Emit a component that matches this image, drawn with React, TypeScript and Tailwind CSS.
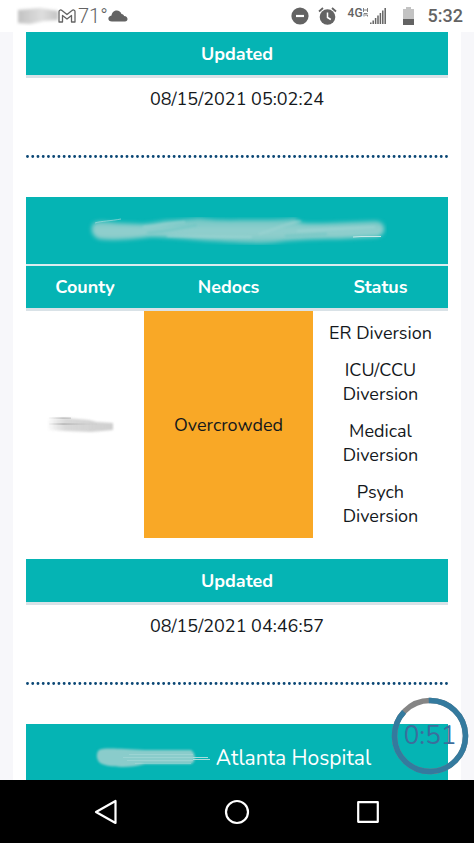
import React from 'react';

const TIME_LEFT = '0:51';

// Soft brush strokes that hide a name
const TitleSmudge: React.FC = () => (
  <svg className="h-7 w-[300px]" viewBox="0 0 300 28" aria-hidden="true">
    <defs>
      <linearGradient id="title-fade" x1="0" y1="0" x2="0" y2="1">
        <stop offset="0" stopColor="#6cc5c3" />
        <stop offset="0.45" stopColor="#90cfcd" />
        <stop offset="0.75" stopColor="#8ccdcb" />
        <stop offset="1" stopColor="#5ac2c0" />
      </linearGradient>
      <filter id="soft-title" x="-5%" y="-40%" width="110%" height="180%">
        <feGaussianBlur stdDeviation="2" />
      </filter>
      <filter id="soft-streak" x="-5%" y="-50%" width="110%" height="200%">
        <feGaussianBlur stdDeviation="1.2" />
      </filter>
    </defs>
    <path
      d="M7 6C13 3 22 5 32 6L56 7C70 6 74 3 90 3L112 1C120 2 132 3 146 3C166 2 184 4 210 1C206 6 222 7 242 6L288 4C300 4 300 18 290 20L252 22C222 22 204 23 186 26C166 28 146 25 122 24C98 22 80 20 62 20C40 23 24 24 12 22C4 19 3 10 7 6Z"
      fill="url(#title-fade)"
      filter="url(#soft-title)"
    />
    <g fill="none" filter="url(#soft-streak)">
      <path d="M56 10C76 9 84 5 98 5M172 17C188 13 196 7 214 4" stroke="#a0d6d4" strokeWidth="2" opacity="0.6" />
      <path d="M60 16C78 15 92 11 110 8M198 19L240 17" stroke="#70c7c5" strokeWidth="3" opacity="0.6" />
      <path d="M80 19L165 20M210 14L288 10" stroke="#a2d7d5" strokeWidth="2" opacity="0.6" />
    </g>
    <path d="M8 6C14 4 24 4 34 2" stroke="#b5e0df" strokeWidth="0.8" fill="none" opacity="0.8" />
    <path d="M266 20L274 19.500L294 19.500" stroke="#c9e9e8" strokeWidth="1" fill="none" />
  </svg>
);

const NameSmudge: React.FC = () => (
  <svg className="h-6 w-[117px]" viewBox="0 0 117 24" aria-hidden="true">
    <defs>
      <filter id="soft-name" x="-5%" y="-30%" width="110%" height="160%">
        <feGaussianBlur stdDeviation="1.3" />
      </filter>
    </defs>
    <path
      d="M4 4C10 1 26 3 50 4L96 4C101 7 101 16 96 18L50 18C36 22 14 22 5 17C1 13 1 7 4 4Z"
      fill="#8acccb"
      filter="url(#soft-name)"
    />
    <path d="M34 8.500H98M28 11.500H99M32 14.500H98M40 17.500H96" stroke="#b5dfde" strokeWidth="0.8" opacity="0.5" />
    <path d="M98 11.500H113M98 13.500H115" stroke="#a9dedd" strokeWidth="1" />
  </svg>
);

const CountySmudge: React.FC = () => (
  <svg className="h-5 w-[68px]" viewBox="0 0 68 20" aria-hidden="true">
    <defs>
      <linearGradient id="county-fade" gradientUnits="userSpaceOnUse" x1="0" y1="0" x2="64" y2="0">
        <stop offset="0" stopColor="#aaa" stopOpacity="0" />
        <stop offset="0.3" stopColor="#bbb" stopOpacity="0.8" />
        <stop offset="1" stopColor="#bbb" />
      </linearGradient>
      <linearGradient id="county-streak" gradientUnits="userSpaceOnUse" x1="0" y1="0" x2="64" y2="0">
        <stop offset="0" stopColor="#888" stopOpacity="0" />
        <stop offset="0.25" stopColor="#888" stopOpacity="0.7" />
        <stop offset="0.7" stopColor="#aaa" stopOpacity="0.1" />
      </linearGradient>
      <filter id="soft-county" x="-5%" y="-30%" width="110%" height="160%">
        <feGaussianBlur stdDeviation="0.9" />
      </filter>
    </defs>
    <path d="M0 4L20 3L42 5L50 7L66 8V15L44 17L18 16L0 15Z" fill="url(#county-fade)" opacity="0.7" filter="url(#soft-county)" />
    <path d="M2 3L24 3.1M2 9L50 9.1" stroke="url(#county-streak)" strokeWidth="1" />
  </svg>
);

const StatusBar: React.FC = () => (
  <header className="flex h-8 shrink-0 items-center justify-between bg-white pl-4 pr-[11px] font-['Roboto',sans-serif] text-[#636363]">
    <div className="flex items-center">
      <svg className="h-5 w-[42px]" viewBox="0 0 42 20" aria-hidden="true">
        <defs>
          <linearGradient id="bar-fade">
            <stop offset="0" stopColor="#c2c2c2" />
            <stop offset="0.6" stopColor="#dedede" />
            <stop offset="1" stopColor="#c4c4c4" />
          </linearGradient>
          <filter id="soft-bar" x="-10%" y="-20%" width="120%" height="140%">
            <feGaussianBlur stdDeviation="1.5" />
          </filter>
        </defs>
        <path d="M2 4L24 2L42 5V14L28 15L14 18L2 17Z" fill="url(#bar-fade)" filter="url(#soft-bar)" />
      </svg>
      <svg className="h-[14px] w-[18px]" viewBox="0 0 18 14" fill="none" stroke="currentColor" aria-label="Gmail">
        <path d="M1 13V2.5C1 .8 3 .6 4 1.5L9 5.5L14 1.5C15 .6 17 .8 17 2.5V13H13.5V6.5L9 10L4.500 6.500V13Z" strokeWidth="1.300" strokeLinejoin="round" />
      </svg>
      <span className="ml-0.5 w-7 text-xl font-light leading-8">71°</span>
      <svg className="ml-0.5 h-3 w-5" viewBox="0 0 20 12" fill="currentColor" aria-label="Cloudy">
        <path d="M4 11.500C-1 11.500-.5 6 3.500 5.500C4-.5 12-1.500 13.500 4C15 4 16 5 16 6C20.500 6 20.500 11.500 17 11.500Z" />
      </svg>
    </div>
    <div className="flex items-center">
      <svg className="h-[18px] w-[18px]" viewBox="0 0 18 18" aria-label="Do not disturb">
        <circle cx="9" cy="9" r="8.600" fill="currentColor" />
        <path d="M5 9H13" stroke="#fff" strokeWidth="2.200" />
      </svg>
      <svg className="ml-[9px] h-5 w-[19px]" viewBox="0 0 19 20" fill="none" aria-label="Alarm">
        <circle cx="9.500" cy="11" r="7.800" fill="currentColor" />
        <path d="M1 5.500L5 2M18 5.500L14 2" stroke="currentColor" strokeWidth="1.800" />
        <path d="M9.500 6.500V11.500L12.800 13.500" stroke="#fff" strokeWidth="1.500" />
      </svg>
      <div className="ml-[11px] flex h-8 items-start">
        <span className="pt-[5px] text-xs font-medium leading-4">4G</span>
        <svg className="mt-2 h-[9px] w-[5px]" viewBox="0 0 5 9" fill="none" stroke="currentColor" aria-hidden="true">
          <path d="M.5 0V4M4.500 0V4M.5 2H4.500M4.500 5.500H1V8.500M2 7H4.500V8.500" strokeWidth=".8" />
        </svg>
        <svg className="ml-0.5 mt-2 h-4 w-4" viewBox="0 0 16 16" fill="none" stroke="currentColor" aria-label="Signal">
          <path d="M.8 16V14.500M3.200 16V12.500M5.600 16V10M8 16V7.500M10.400 16V5M12.800 16V2.500M15.200 16V0" strokeWidth="1.500" />
        </svg>
      </div>
      <svg className="ml-[17px] h-[18px] w-[11px]" viewBox="0 0 11 18" aria-label="Battery">
        <path d="M3 0H8V2H11V18H0V2H3Z" fill="#c3c3c3" />
        <path d="M0 12H11V18H0Z" fill="currentColor" />
      </svg>
      <span className="ml-[14px] text-lg font-medium leading-8">5:32</span>
    </div>
  </header>
);

const UpdatedTable: React.FC<{ time: string }> = ({ time }) => (
  <table className="w-full border-separate border-spacing-0 text-center">
    <thead>
      <tr>
        <th className="h-[46px] border-b-[3px] border-[#d9e2e7] bg-[#05b4b4] p-0 font-bold text-white">Updated</th>
      </tr>
    </thead>
    <tbody>
      <tr>
        <td className="h-[42px] p-0">{time}</td>
      </tr>
    </tbody>
  </table>
);

const DottedRule: React.FC = () => (
  <svg className="mb-[39px] mt-[35px] block h-[3px] w-full" aria-hidden="true">
    <line x1="1.500" y1="1.500" x2="100%" y2="1.500" stroke="#0b4775" strokeWidth="2.900" strokeLinecap="round" strokeDasharray="0 5.237" />
  </svg>
);

const statuses = [['ER Diversion'], ['ICU/CCU', 'Diversion'], ['Medical', 'Diversion'], ['Psych', 'Diversion']];

const HospitalTable: React.FC = () => (
  <table className="mb-[21px] w-full table-fixed border-separate border-spacing-0 text-center">
    <colgroup>
      <col className="w-[28%]" />
      <col className="w-[40%]" />
      <col className="w-[32%]" />
    </colgroup>
    <thead className="bg-[#05b4b4] text-white">
      <tr>
        <th colSpan={3} className="h-[69px] border-b-2 border-[#dcecef] p-0">
          <div className="flex justify-center">
            <TitleSmudge />
          </div>
        </th>
      </tr>
      <tr>
        <th className="h-[45px] border-b-[3px] border-[#d9e2e7] p-0 font-bold">County</th>
        <th className="h-[45px] border-b-[3px] border-[#d9e2e7] p-0 font-bold">Nedocs</th>
        <th className="h-[45px] border-b-[3px] border-[#d9e2e7] p-0 font-bold">Status</th>
      </tr>
    </thead>
    <tbody>
      <tr>
        <td className="p-0">
          <div className="flex justify-center pr-2">
            <CountySmudge />
          </div>
        </td>
        <td className="bg-[#f9a826] p-0">Overcrowded</td>
        <td className="px-0 py-2.5">
          <ul className="flex flex-col gap-[13px]">
            {statuses.map((lines) => (
              <li key={lines[0]}>
                {lines.map((line) => (
                  <span key={line} className="block">{line}</span>
                ))}
              </li>
            ))}
          </ul>
        </td>
      </tr>
    </tbody>
  </table>
);

const Countdown: React.FC = () => (
  <div className="absolute bottom-[5px] right-[5px] flex size-[78px] items-center justify-center">
    <svg className="absolute inset-0 size-full" viewBox="0 0 78 78" fill="none" strokeWidth="5.500" aria-hidden="true">
      <circle cx="39" cy="39" r="35.500" stroke="#858585" />
      <circle cx="39" cy="39" r="35.500" stroke="#347a9e" pathLength="60" strokeDasharray="52.500 60" transform="rotate(-92 39 39)" />
    </svg>
    <span className="relative text-[26px] leading-8 text-[#3c6e9c]">{TIME_LEFT}</span>
  </div>
);

const NavBar: React.FC = () => (
  <nav className="flex h-[63px] shrink-0 bg-black px-10 text-white">
    <button type="button" aria-label="Back" className="flex flex-1 items-center justify-center">
      <svg className="size-7" viewBox="0 0 28 28" fill="none" stroke="currentColor" strokeWidth="2.200" strokeLinejoin="round">
        <path d="M23.500 3V25L4 14Z" />
      </svg>
    </button>
    <button type="button" aria-label="Home" className="flex flex-1 items-center justify-center">
      <svg className="size-7" viewBox="0 0 28 28" fill="none" stroke="currentColor" strokeWidth="2.200">
        <circle cx="14" cy="14" r="11" />
      </svg>
    </button>
    <button type="button" aria-label="Recent apps" className="flex flex-1 items-center justify-center">
      <svg className="size-7" viewBox="0 0 28 28" fill="none" stroke="currentColor" strokeWidth="2.200" strokeLinejoin="round">
        <rect x="4.200" y="4.200" width="19.600" height="19.600" />
      </svg>
    </button>
  </nav>
);

export default function App() {
  return (
    <div className="flex h-screen flex-col overflow-hidden bg-[#f7f7fa] font-['Nunito','Lato',sans-serif] text-lg leading-6 text-[#14181c]">
      <StatusBar />
      <main className="relative min-h-0 flex-1 overflow-hidden px-[13px]">
        <div className="bg-white px-[13px]">
          <UpdatedTable time="08/15/2021 05:02:24" />
          <DottedRule />
          <HospitalTable />
          <UpdatedTable time="08/15/2021 04:46:57" />
          <DottedRule />
          <div className="flex h-[67px] items-center justify-center gap-1 bg-[#05b4b4] pr-2 text-[21px] text-white">
            <NameSmudge />
            <h2>Atlanta Hospital</h2>
          </div>
        </div>
        <Countdown />
      </main>
      <NavBar />
    </div>
  );
}
